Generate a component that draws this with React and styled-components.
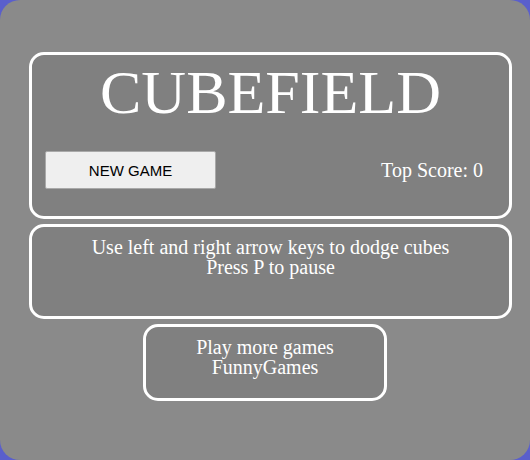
import React from 'react';
import styled, { createGlobalStyle } from 'styled-components';

const GlobalStyle = createGlobalStyle`
  html, body {
    margin: 0;
    padding: 0;
    background: #5a5fcc;
  }
`;

const Screen = styled.div`
  box-sizing: border-box;
  width: 530px;
  height: 460px;
  padding: 52px 18px 0 29px;
  display: flex;
  flex-direction: column;
  background: #8a8a8a;
  border-radius: 20px;
  font-family: 'Liberation Serif', 'Times New Roman', serif;
  color: #fff;
`;

const Panel = styled.div`
  box-sizing: border-box;
  border: 3px solid #fff;
  border-radius: 15px;
  background: #808080;
  text-align: center;
  font-size: 20px;
  line-height: 20px;
`;

const Header = styled(Panel)`
  padding: 2px 0 27px;
`;

const Title = styled.h1`
  margin: 0;
  font-size: 62px;
  font-weight: normal;
  line-height: 71px;
`;

const Controls = styled.div`
  margin-top: 23px;
  display: flex;
  align-items: center;
  justify-content: space-between;
  padding: 0 26px 0 13px;
`;

const NewGameButton = styled.button`
  width: 171px;
  height: 38px;
  background: #efefef;
  border: 1px solid #a9a9a9;
  border-radius: 2px;
  font-family: 'Liberation Sans', Arial, sans-serif;
  font-size: 15px;
  color: #000;
  cursor: pointer;
`;

const Score = styled.span`
  font-size: 20px;
`;

const Instructions = styled(Panel)`
  margin-top: 5px;
  height: 95px;
  padding-top: 10px;
`;

const MoreGames = styled(Panel)`
  margin-top: 5px;
  align-self: center;
  margin-right: 11px;
  width: 244px;
  height: 77px;
  padding-top: 10px;
`;

const App = () => {
  return (
    <>
      <GlobalStyle />
      <Screen>
        <Header>
          <Title>CUBEFIELD</Title>
          <Controls>
            <NewGameButton>NEW GAME</NewGameButton>
            <Score>Top Score: 0</Score>
          </Controls>
        </Header>
        <Instructions>
          Use left and right arrow keys to dodge cubes
          <br />
          Press P to pause
        </Instructions>
        <MoreGames>
          Play more games
          <br />
          FunnyGames
        </MoreGames>
      </Screen>
    </>
  );
};

export default App;
